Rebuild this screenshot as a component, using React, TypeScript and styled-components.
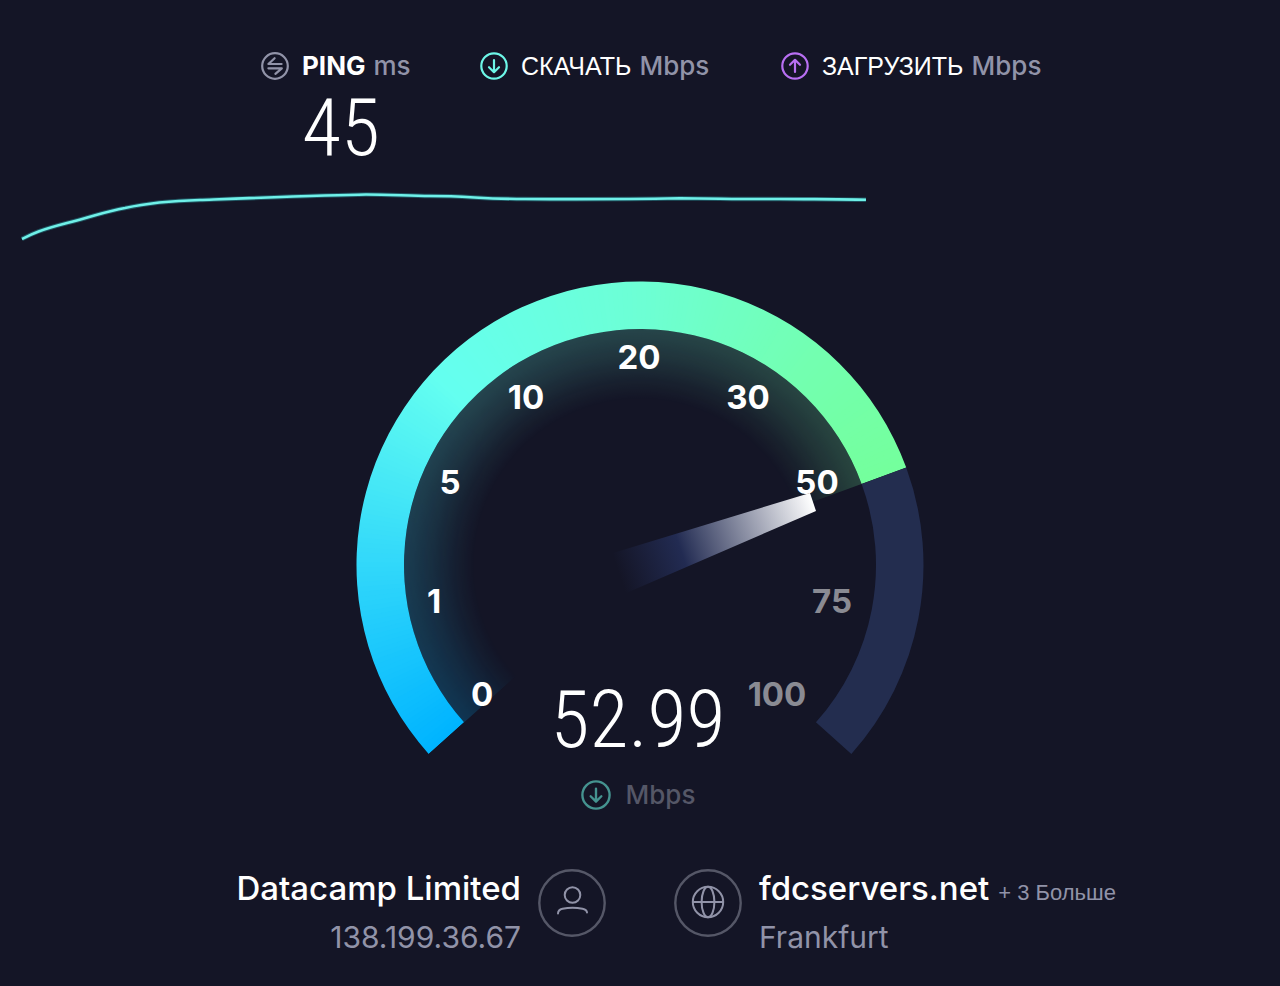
import React from "react";
import styled, { createGlobalStyle } from "styled-components";

const GlobalStyle = createGlobalStyle`
  * { box-sizing: border-box; }
  body {
    margin: 0;
    background: #141526;
    color: #fff;
    font-family: Inter, "Liberation Sans", sans-serif;
  }
`;

const Page = styled.main`
  min-height: 100vh;
  display: flex;
  flex-direction: column;
  padding: 48px 0 32px;
  overflow: hidden;
`;

const Metrics = styled.section`
  display: grid;
  grid-template-columns: 149px 231px 258px;
  justify-content: center;
  column-gap: 70px;
  padding-left: 20px;
  height: 140px;
`;

const Metric = styled.div`
  display: flex;
  flex-direction: column;
`;

const MetricLabel = styled.h2`
  display: flex;
  align-items: center;
  margin: 0;
  height: 36px;
  font-size: 26px;
  line-height: 36px;
  font-weight: 700;
  white-space: nowrap;

  svg { flex: none; margin-right: 13px; }
`;

const Cyrillic = styled.span`
  font-family: "Liberation Sans", Arial, sans-serif;
  font-size: 25px;
  font-weight: 400;
`;

const Unit = styled.span<{ $dim?: boolean }>`
  margin-left: 8px;
  font-size: 26px;
  line-height: 36px;
  font-weight: 500;
  color: ${(p) => (p.$dim ? "#555767" : "#9193a8")};
`;

const Digits = styled.output`
  font-family: "Roboto Condensed", "Liberation Sans Narrow", Roboto, sans-serif;
  font-weight: 300;
  font-size: 80px;
  line-height: 84px;
  text-align: center;
`;

const PingValue = styled(Digits)`
  padding: 2px 0 0 11px;
`;

const Trace = styled.svg`
  display: block;
  width: 100%;
`;

const Gauge = styled.section`
  display: grid;
  justify-items: center;
  margin-top: 22px;

  > * { grid-area: 1 / 1; }
`;

const Dial = styled.svg`
  width: 590px;
  height: 500px;
`;

const Speed = styled(Digits)`
  align-self: end;
  padding: 0 4px 8px 0;
`;

const SpeedUnit = styled.div`
  display: flex;
  justify-content: center;
  align-items: center;
  gap: 7px;
  height: 50px;
  padding-right: 4px;
`;

const Hosts = styled.footer`
  display: grid;
  grid-template-columns: 1fr 1fr;
  column-gap: 68px;
  margin-top: 44px;
`;

const Host = styled.div<{ $end?: boolean }>`
  display: flex;
  flex-direction: ${(p) => (p.$end ? "row-reverse" : "row")};
  text-align: ${(p) => (p.$end ? "right" : "left")};
  gap: 17px;
  white-space: nowrap;

  > svg { flex: none; margin-top: 5px; }
`;

const HostName = styled.div`
  font-size: 33px;
  line-height: 48px;
  font-weight: 500;
`;

const HostDetail = styled.div`
  font-size: 30px;
  line-height: 50px;
  color: #9193a8;
`;

const More = styled.span`
  margin-left: 9px;
  font-family: "Liberation Sans", Arial, sans-serif;
  font-size: 22px;
  line-height: 22px;
  font-weight: 400;
  color: #9193a8;
`;

const ArrowIcon = ({ color, up, size = 28 }: { color: string; up?: boolean; size?: number }) => (
  <svg width={size} height={size} viewBox="-14 -14 28 28" fill="none" stroke={color} strokeWidth="2.2" strokeLinecap="round" strokeLinejoin="round" aria-hidden="true">
    <circle r="12.7" />
    <path d={up ? "M0 6V-6M-5 -1.2L0 -6.2L5 -1.2" : "M0 -6V6M-5 1.2L0 6.2L5 1.2"} />
  </svg>
);

const PingIcon = () => (
  <svg width="28" height="28" viewBox="-14 -14 28 28" fill="none" stroke="#9193a8" strokeWidth="2.2" strokeLinecap="round" strokeLinejoin="round" aria-hidden="true">
    <circle r="12.8" />
    <path d="M6.6 -2H-6.6L-0.4 -7.8M-6.6 2.3H6.8L0.4 7.9" />
  </svg>
);

const UserIcon = () => (
  <svg width="68" height="68" viewBox="-34 -34 68 68" fill="none" aria-hidden="true">
    <circle r="32.7" stroke="#555767" strokeWidth="2.4" />
    <g stroke="#9193a8" strokeWidth="2" strokeLinecap="round">
      <circle cx="0.5" cy="-8" r="7.8" />
      <path d="M-14 10.5C-14 7.6 -12.6 6.4 -9.5 5.7C-3 4.4 4 4.4 10.5 5.7C13.6 6.4 15 7.2 15 9.5" />
    </g>
  </svg>
);

const GlobeIcon = () => (
  <svg width="68" height="68" viewBox="-34 -34 68 68" fill="none" aria-hidden="true">
    <circle r="32.7" stroke="#555767" strokeWidth="2.4" />
    <g stroke="#9193a8" strokeWidth="2">
      <circle cy="-1" r="15.2" />
      <ellipse cy="-1" rx="6.4" ry="15.2" />
      <path d="M-15.2 -1H15.2" />
    </g>
  </svg>
);

const START = 138.2;
const END = 401.8;
const NOW = 339.9;

const point = (r: number, deg: number) => {
  const a = (deg * Math.PI) / 180;
  return `${(r * Math.cos(a)).toFixed(2)} ${(r * Math.sin(a)).toFixed(2)}`;
};

const band = (outer: number, inner: number, from: number, to: number) => {
  const large = to - from > 180 ? 1 : 0;
  return `M${point(outer, from)}A${outer} ${outer} 0 ${large} 1 ${point(outer, to)}L${point(inner, to)}A${inner} ${inner} 0 ${large} 0 ${point(inner, from)}Z`;
};

const STOPS: [number, number[]][] = [
  [START, [0, 180, 255]],
  [180, [50, 216, 250]],
  [222, [100, 255, 240]],
  [270, [109, 255, 212]],
  [310, [115, 255, 176]],
  [NOW, [116, 255, 156]],
];

const colorAt = (deg: number) => {
  let i = 1;
  while (i < STOPS.length - 1 && STOPS[i][0] < deg) i++;
  const [d0, c0] = STOPS[i - 1];
  const [d1, c1] = STOPS[i];
  const t = Math.min(1, (deg - d0) / (d1 - d0));
  return `rgb(${c0.map((c, k) => Math.round(c + (c1[k] - c) * t)).join(",")})`;
};

const STEPS = 200;
const SLICE = (NOW - START) / STEPS;

/* Slices overlap a little so that no seam shows between them. */
const Sweep = ({ outer, inner }: { outer: number; inner: number }) => (
  <>
    {Array.from({ length: STEPS }, (_, i) => {
      const from = START + i * SLICE;
      return <path key={i} d={band(outer, inner, from, Math.min(NOW, from + SLICE * 1.6))} fill={colorAt(from)} />;
    })}
  </>
);

const TICKS = [
  { value: 0, x: -158, y: 130 },
  { value: 1, x: -206, y: 37 },
  { value: 5, x: -190, y: -82 },
  { value: 10, x: -114, y: -167 },
  { value: 20, x: -1, y: -207 },
  { value: 30, x: 108, y: -167 },
  { value: 50, x: 177, y: -82 },
  { value: 75, x: 192, y: 37 },
  { value: 100, x: 137, y: 130 },
];

const TickText = styled.text<{ $ahead: boolean }>`
  font-size: 33px;
  font-weight: 700;
  text-anchor: middle;
  fill: ${(p) => (p.$ahead ? "#8a8b93" : "#fff")};
`;

const TRACE =
  "M22 57C32 52 38 48.500 67 41C95 34 105 29.500 125 26C150 20.500 170 18.800 200 18C240 16.500 330 13 366 12.500C390 12.500 410 14 430 14C470 14 480 17 525 17C600 17.500 640 17 680 16.300C720 16.500 740 17.300 780 17C820 17.300 840 17 866 17.800";

export default function App() {
  return (
    <>
      <GlobalStyle />
      <Page>
        <Metrics>
          <Metric>
            <MetricLabel><PingIcon />PING<Unit>ms</Unit></MetricLabel>
            <PingValue>45</PingValue>
          </Metric>
          <Metric>
            <MetricLabel><ArrowIcon color="#6df6e7" /><Cyrillic>СКАЧАТЬ</Cyrillic><Unit>Mbps</Unit></MetricLabel>
          </Metric>
          <Metric>
            <MetricLabel><ArrowIcon color="#b86ff2" up /><Cyrillic>ЗАГРУЗИТЬ</Cyrillic><Unit>Mbps</Unit></MetricLabel>
          </Metric>
        </Metrics>

        <Trace viewBox="0 0 1280 60" fill="none" aria-hidden="true">
          <g transform="translate(0 -6)">
            <path d={TRACE} stroke="#2a8f98" strokeOpacity="0.5" strokeWidth="4.500" />
            <path d={TRACE} stroke="#6ff0e8" strokeWidth="2.600" />
          </g>
        </Trace>

        <Gauge>
          <Dial viewBox="-295 -295 590 500">
            <defs>
              <radialGradient id="fade" gradientUnits="userSpaceOnUse" cx="0" cy="0" r="236">
                <stop offset="0.7" stopColor="#fff" stopOpacity="0" />
                <stop offset="0.78" stopColor="#fff" stopOpacity="0.05" />
                <stop offset="0.88" stopColor="#fff" stopOpacity="0.13" />
                <stop offset="1" stopColor="#fff" stopOpacity="0.21" />
              </radialGradient>
              <mask id="glow" maskUnits="userSpaceOnUse" x="-240" y="-240" width="480" height="480">
                <circle r="236" fill="url(#fade)" />
              </mask>
              <mask id="ring" maskUnits="userSpaceOnUse" x="-295" y="-295" width="590" height="500">
                <path d={band(283.5, 236, START, NOW)} fill="#fff" />
              </mask>
              <linearGradient id="needle" gradientUnits="userSpaceOnUse" x1="-22" y1="6" x2="173" y2="-62">
                <stop offset="0" stopColor="#222b52" stopOpacity="0" />
                <stop offset="0.32" stopColor="#222b52" />
                <stop offset="1" stopColor="#fff" />
              </linearGradient>
            </defs>
            <g mask="url(#glow)"><Sweep outer={238} inner={160} /></g>
            <path d={band(283.5, 236, NOW, END)} fill="#232d4f" />
            <g mask="url(#ring)"><Sweep outer={286} inner={233} /></g>
            {TICKS.map((t) => (
              <TickText key={t.value} x={t.x} y={t.y + 11} $ahead={t.value > 52.99}>{t.value}</TickText>
            ))}
            <path d="M-27 -12L170 -72L176 -54L-16 29Z" fill="url(#needle)" />
          </Dial>
          <Speed>52.99</Speed>
        </Gauge>
        <SpeedUnit>
          <ArrowIcon color="#459390" size={30} />
          <Unit $dim>Mbps</Unit>
        </SpeedUnit>

        <Hosts>
          <Host $end>
            <UserIcon />
            <div>
              <HostName>Datacamp Limited</HostName>
              <HostDetail>138.199.36.67</HostDetail>
            </div>
          </Host>
          <Host>
            <GlobeIcon />
            <div>
              <HostName>fdcservers.net<More>+ 3 Больше</More></HostName>
              <HostDetail>Frankfurt</HostDetail>
            </div>
          </Host>
        </Hosts>
      </Page>
    </>
  );
}
